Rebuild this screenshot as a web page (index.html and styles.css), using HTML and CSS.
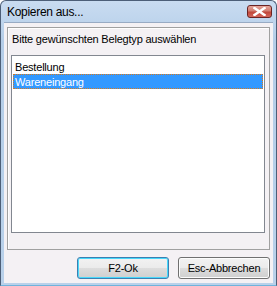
FILE: index.html
```html
<!DOCTYPE html>
<html>
<head>
<meta charset="utf-8">
<link rel="stylesheet" href="styles.css">
</head>
<body>
<div class="window">
  <div class="titlebar">
    <span class="title">Kopieren aus...</span>
    <span class="close">
      <svg width="13" height="9" viewBox="0 0 13 9"><path d="M1.5 1 L11.5 8 M11.5 1 L1.5 8" stroke="#fff" stroke-width="2.4" stroke-linecap="square"/></svg>
    </span>
  </div>
  <div class="content">
    <div class="panel">
      <div class="label">Bitte gewünschten Belegtyp auswählen</div>
      <div class="list">
        <div class="item">Bestellung</div>
        <div class="item selected">Wareneingang</div>
      </div>
    </div>
    <div class="buttons">
      <button class="btn default">F2-Ok</button>
      <button class="btn">Esc-Abbrechen</button>
    </div>
  </div>
</div>
</body>
</html>
```
FILE: styles.css
```css
* { box-sizing: border-box; }
html, body { margin: 0; padding: 0; }
body {
  width: 277px;
  height: 286px;
  font-family: "Liberation Sans", Arial, sans-serif;
  font-size: 11px;
  letter-spacing: -0.2px;
  color: #000;
  background: #fff;
}
.window {
  width: 277px;
  height: 286px;
  display: flex;
  flex-direction: column;
  background: linear-gradient(#c9dcf1, #b4cde8 40px, #b9d1ea);
  border: 1px solid #4d5f78;
  border-radius: 6px 6px 0 0;
  border-bottom-color: #6fb3dc;
}
.titlebar {
  height: 21px;
  display: flex;
  align-items: center;
  justify-content: space-between;
  padding: 0 4px 0 6px;
  flex-shrink: 0;
}
.title {
  font-size: 12px;
  letter-spacing: -0.3px;
  color: #000;
  padding-top: 1px;
}
.close {
  width: 25px;
  height: 13px;
  margin-top: -1px;
  border: 1px solid #6a2424;
  border-radius: 3px;
  background: linear-gradient(#e6a59b, #d27d70 45%, #c0463a 55%, #d4685c);
  display: flex;
  align-items: center;
  justify-content: center;
}
.close svg { display: block; }
.content {
  flex: 1;
  margin: 0 3px 2px 3px;
  background: #f4f1f4;
  border-top: 1px solid #98abc4;
  padding: 4px 3px 3px 3px;
  display: flex;
  flex-direction: column;
}
.panel {
  flex: 1;
  border: 1px solid #a0a0a0;
  box-shadow: inset 1px 1px 0 #fff;
  display: flex;
  flex-direction: column;
  padding: 5px 4px 16px 3px;
}
.label {
  height: 13px;
  line-height: 13px;
  padding-left: 1px;
  margin-bottom: 9px;
}
.list {
  flex: 1;
  background: #fff;
  border: 1px solid #828790;
  padding: 3px 1px 1px 1px;
}
.item {
  height: 15px;
  line-height: 14px;
  padding-left: 1px;
  border: 1px solid transparent;
}
.item.selected {
  background: #3399ff;
  color: #fff;
  border: 1px dotted #d87a1c;
}
.buttons {
  display: flex;
  justify-content: flex-end;
  gap: 9px;
  padding: 7px 0 1px 0;
}
.btn {
  width: 92px;
  height: 22px;
  font-family: "Liberation Sans", Arial, sans-serif;
  font-size: 11px;
  letter-spacing: -0.2px;
  color: #000;
  border: 1px solid #707070;
  border-radius: 3px;
  background: linear-gradient(#f2f2f2, #ebebeb 50%, #dddddd 50%, #cfcfcf);
  box-shadow: inset 0 0 0 1px #fcfcfc;
  padding: 0;
}
.btn.default {
  border-color: #3c7fb1;
  box-shadow: inset 0 0 0 1px #48d8fb;
}
```
